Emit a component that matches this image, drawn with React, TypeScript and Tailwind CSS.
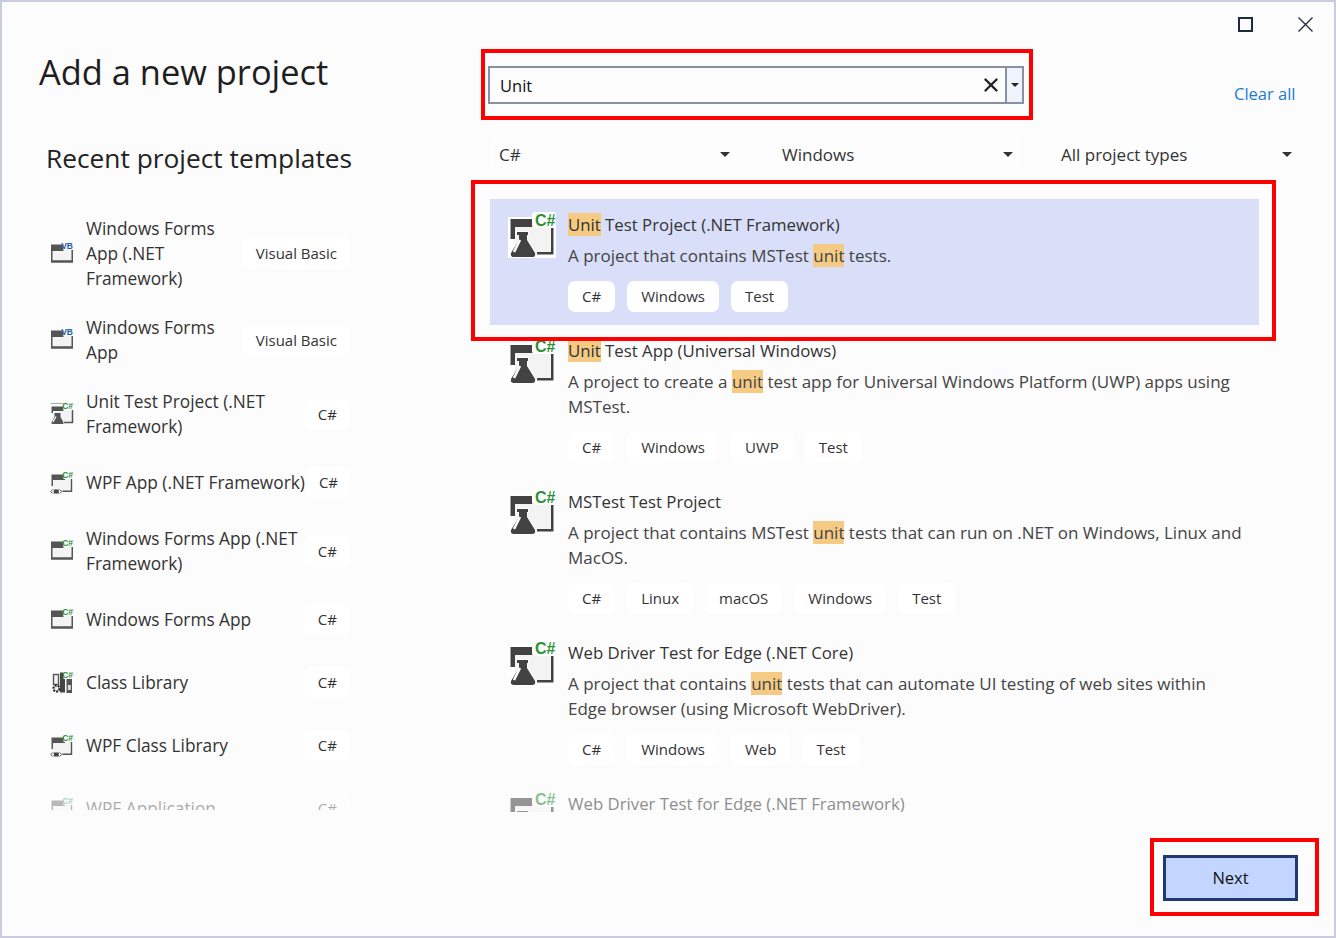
import { X } from "lucide-react"

type Kind = "window" | "test" | "wpf" | "library"

function SmallIcon({ kind, lang }: { kind: Kind; lang: string }) {
  const badge = lang === "VB" ? "#1c5fa8" : "#2f8f3a"
  return (
    <svg width="24" height="24" viewBox="0 0 24 24" className="shrink-0">
      {kind === "window" && (
        <>
          <rect x="1" y="2.500" width="22" height="18" fill="#f3f3f3" />
          <path d="M1 2.500h12.500V9H2.500v9.300h19V8H23v12.700H1z" fill="#555" />
        </>
      )}
      {kind === "test" && (
        <>
          <path d="M1 1.500h13" stroke="#aaa" strokeWidth="1" />
          <path d="M1.500 4.500h12V9H3v2H1.500z" fill="#555" />
          <rect x="3" y="9" width="19" height="11" fill="#f3f3f3" />
          <path d="M22.500 8v12.500H14" stroke="#555" strokeWidth="1.500" fill="none" />
          <path d="M4.500 11h6v4l3 5.500q.5 1.500-1 1.500H2.500q-1.500 0-1-1.500l3-5.500z" fill="#555" />
          <path d="M6 14.500l-3 5.500" stroke="#fff" strokeWidth="1.200" />
        </>
      )}
      {kind === "wpf" && (
        <>
          <rect x="2" y="8" width="20" height="12" fill="#f3f3f3" />
          <path d="M1.500 3.500h13.500V9H3v6H1.500z" fill="#555" />
          <path d="M21.500 7v13.300H12.500" stroke="#555" strokeWidth="1.400" fill="none" />
          <rect x="3.800" y="18.500" width="5" height="4" fill="#444" />
          <path d="M2.800 18.500L.8 20.500l2 2M9.800 18.500l2 2-2 2" stroke="#444" strokeWidth="1" fill="none" />
        </>
      )}
      {kind === "library" && (
        <>
          <rect x="3.500" y="3.500" width="5" height="10" fill="#f3f3f3" stroke="#555" strokeWidth="1.400" />
          <rect x="10" y="1.500" width="5" height="20" fill="#444" />
          <rect x="16.500" y="6" width="5.500" height="16" fill="#555" />
          <rect x="17.800" y="14" width="3" height="5" fill="#ddd" />
          <circle cx="6.500" cy="17.500" r="3" fill="#f3f3f3" stroke="#333" strokeWidth="2.400" strokeDasharray="2 1" />
        </>
      )}
      <rect x="13.500" y="0" width="10" height="8" fill="#fcfcfc" />
      <text x="23" y="7.300" textAnchor="end" fontSize="8.500" fontWeight="700" fill={badge} fontFamily="'Liberation Sans', sans-serif">
        {lang === "VB" ? "VB" : "C#"}
      </text>
    </svg>
  )
}

function FlaskIcon() {
  return (
    <svg width="48" height="48" viewBox="0 0 48 48" className="shrink-0">
      <rect x="0" y="5" width="48" height="41" fill="#fff" />
      <path d="M2.500 7H26v8H7v12H2.500z" fill="#424242" />
      <rect x="7" y="15" width="36" height="25" fill="#f3f3f3" />
      <path d="M29 40h14V14h2.500v28.500H29z" fill="#424242" />
      <path d="M9 20h11v3h-1v5l8 13q1 4-3 4H6q-4 0-3-4l8-13v-5H9z" fill="#424242" stroke="#fff" strokeWidth="1.500" paintOrder="stroke" />
      <path d="M12 28l-6 12" stroke="#fff" strokeWidth="2.500" />
      <rect x="24" y="0" width="24" height="16" rx="3" fill="#fff" />
      <text x="47.500" y="13.500" textAnchor="end" fontSize="16" fontWeight="700" fill="#2f8f3a" fontFamily="'Liberation Sans', sans-serif">C#</text>
    </svg>
  )
}

function Tag({ children, side }: { children: string; side?: boolean }) {
  return <span className={`bg-white rounded-[7px] h-[31px] pl-[14px] ${side ? "pr-[13px]" : "pr-[14px]"} flex items-center text-[15px] text-[#333] whitespace-nowrap`}>{children}</span>
}

const recent: { kind: Kind; lang: string; lines: string[] }[] = [
  { kind: "window", lang: "VB", lines: ["Windows Forms", "App (.NET", "Framework)"] },
  { kind: "window", lang: "VB", lines: ["Windows Forms", "App"] },
  { kind: "test", lang: "C#", lines: ["Unit Test Project (.NET", "Framework)"] },
  { kind: "wpf", lang: "C#", lines: ["WPF App (.NET Framework)"] },
  { kind: "window", lang: "C#", lines: ["Windows Forms App (.NET", "Framework)"] },
  { kind: "window", lang: "C#", lines: ["Windows Forms App"] },
  { kind: "library", lang: "C#", lines: ["Class Library"] },
  { kind: "wpf", lang: "C#", lines: ["WPF Class Library"] },
  { kind: "wpf", lang: "C#", lines: ["WPF Application"] },
]

function Mark({ children }: { children: string }) {
  return <span className="bg-[#f5cb84]">{children}</span>
}

const projects = [
  {
    title: <><Mark>Unit</Mark> Test Project (.NET Framework)</>,
    desc: [<>A project that contains MSTest <Mark>unit</Mark> tests.</>],
    tags: ["C#", "Windows", "Test"],
  },
  {
    title: <><Mark>Unit</Mark> Test App (Universal Windows)</>,
    desc: [<>A project to create a <Mark>unit</Mark> test app for Universal Windows Platform (UWP) apps using</>, <>MSTest.</>],
    tags: ["C#", "Windows", "UWP", "Test"],
  },
  {
    title: <>MSTest Test Project</>,
    desc: [<>A project that contains MSTest <Mark>unit</Mark> tests that can run on .NET on Windows, Linux and</>, <>MacOS.</>],
    tags: ["C#", "Linux", "macOS", "Windows", "Test"],
  },
  {
    title: <>Web Driver Test for Edge (.NET Core)</>,
    desc: [<>A project that contains <Mark>unit</Mark> tests that can automate UI testing of web sites within</>, <>Edge browser (using Microsoft WebDriver).</>],
    tags: ["C#", "Windows", "Web", "Test"],
  },
  {
    title: <>Web Driver Test for Edge (.NET Framework)</>,
    desc: [],
    tags: [],
  },
]

function Filter({ label, className = "" }: { label: string; className?: string }) {
  return (
    <div className={`w-[245px] h-[35px] flex items-center justify-between pl-[9px] pr-[5px] bg-[#fdfdfd] ${className}`}>
      <span className="text-[17px] text-[#333]">{label}</span>
      <span className="w-0 h-0 border-x-[5px] border-x-transparent border-t-[5px] border-t-[#333]" />
    </div>
  )
}

export default function App() {
  return (
    <div className="relative w-[1336px] h-[938px] border-2 border-[#c9ccdd] bg-[#fcfcfc] flex font-['Open_Sans',sans-serif] text-[#222] overflow-hidden">
      <aside className="w-[348px] shrink-0 flex flex-col">
        <h1 className="pl-[37px] pt-[45px] h-[140px] text-[34.400px] leading-[50px] text-[#1e1e1e] whitespace-nowrap">Add a new project</h1>
        <h2 className="pl-[44px] h-[64px] -mt-[2px] text-[26.300px] leading-[36px] text-[#222] whitespace-nowrap">Recent project templates</h2>
        <div className="h-[606px] overflow-hidden">
          {recent.map((r, i) => (
            <div key={i} className={`flex items-center pl-[48px] ${r.lines.length > 1 ? "py-3" : "py-[16px]"} ${i === 8 ? "opacity-40" : ""}`}>
              <SmallIcon kind={r.kind} lang={r.lang} />
              <div className="ml-[12px] flex-1 text-[17.300px] leading-[25px] text-[#333] whitespace-nowrap">
                {r.lines.map(l => <div key={l}>{l}</div>)}
              </div>
              <Tag side>{r.lang === "VB" ? "Visual Basic" : "C#"}</Tag>
            </div>
          ))}
        </div>
      </aside>

      <main className="ml-[140px] flex-1 flex flex-col">
        <div className="h-[64px] flex justify-end items-start pt-[15px] pr-[21px] gap-[45px]">
          <div className="w-[15px] h-[15px] border-2 border-[#1f2a3d]" />
          <svg width="15" height="15" viewBox="0 0 15 15" className="text-[#1f2a3d]">
            <path d="M.5.5l14 14M14.500.5l-14 14" stroke="currentColor" strokeWidth="1.300" />
          </svg>
        </div>
        <div className="flex items-center h-[38px]">
          <div className="-ml-[2px] w-[536px] h-[38px] border-2 border-[#8591a5] flex items-center pl-[10px]">
            <span className="flex-1 text-[16.500px] text-[#111] pt-[3px]">Unit</span>
            <X size={22} strokeWidth={2.600} className="text-[#222] mr-[3px]" />
            <span className="w-[17px] h-full border-l-2 border-[#8591a5] bg-[#f0f3fc] flex justify-center items-center">
              <span className="w-0 h-0 border-x-[4px] border-x-transparent border-t-[4px] border-t-[#222]" />
            </span>
          </div>
          <a className="ml-[210px] mt-[19px] text-[16.500px] text-[#1a7bd6] whitespace-nowrap">Clear all</a>
        </div>
        <div className="flex mt-[33px] h-[35px]">
          <Filter label="C#" />
          <Filter label="Windows" className="ml-[38px]" />
          <Filter label="All project types" className="ml-[34px]" />
        </div>
        <div className="mt-[27px] h-[613px] w-[769px] overflow-hidden">
          {projects.map((p, i) => (
            <div key={i} className={`flex pl-[18px] pr-[20px] pt-[13px] pb-[13px] ${i === 0 ? "bg-[#d9dff8]" : ""} ${i === 4 ? "opacity-55" : ""}`}>
              <FlaskIcon />
              <div className="ml-[12px] flex-1 min-w-0">
                <div className="text-[16.800px] leading-[26px] text-[#333] whitespace-nowrap">{p.title}</div>
                <div className="text-[17px] leading-[25px] text-[#444] mt-[5px] whitespace-nowrap">
                  {p.desc.map((d, j) => <div key={j}>{d}</div>)}
                </div>
                <div className="flex gap-[12px] mt-[13px]">
                  {p.tags.map(t => <Tag key={t}>{t}</Tag>)}
                </div>
              </div>
            </div>
          ))}
        </div>
        <div className="flex-1 flex items-start justify-end pt-[43px] pr-[36px]">
          <button className="w-[135px] h-[46px] border-[3px] border-[#1f3a73] bg-[#c4d5ff] text-[16.500px] text-[#111]">Next</button>
        </div>
      </main>

      <div className="absolute left-[479px] top-[47px] w-[552px] h-[71px] border-4 border-[#ff0000]" />
      <div className="absolute left-[469px] top-[178px] w-[805px] h-[161px] border-4 border-[#ff0000]" />
      <div className="absolute left-[1148px] top-[836px] w-[169px] h-[78px] border-4 border-[#ff0000]" />
    </div>
  )
}
